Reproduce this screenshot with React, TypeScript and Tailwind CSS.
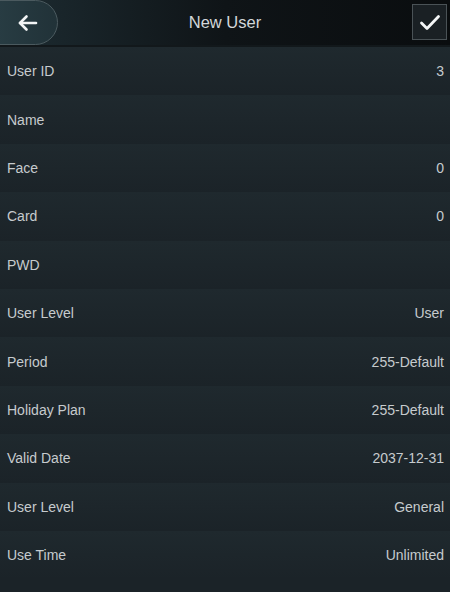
import React from "react";

const rows: [string, string][] = [
  ["User ID", "3"],
  ["Name", ""],
  ["Face", "0"],
  ["Card", "0"],
  ["PWD", ""],
  ["User Level", "User"],
  ["Period", "255-Default"],
  ["Holiday Plan", "255-Default"],
  ["Valid Date", "2037-12-31"],
  ["User Level", "General"],
  ["Use Time", "Unlimited"],
];

export default function App() {
  return (
    <div
      className="w-[450px] h-[592px] overflow-hidden bg-[#1b2328] text-[#c6cbce]"
      style={{ fontFamily: '"Liberation Sans", Arial, sans-serif' }}
    >
      {/* Header */}
      <div className="relative h-[45px] flex items-center justify-center bg-gradient-to-r from-[#1d2c32] via-[#0f1417] to-[#0a0d0f]">
        <button className="absolute left-[-30px] top-0 h-[45px] w-[88px] rounded-full border border-[#4b5a5f] bg-gradient-to-r from-[#2b4148] to-[#213238] flex items-center justify-end pr-[19px]">
          <svg width="21" height="18" viewBox="0 0 21 18" fill="none" stroke="#f2f4f5" strokeWidth="2.6" strokeLinecap="round" strokeLinejoin="round">
            <path d="M19 9H3" />
            <path d="M9.5 2.5 3 9l6.5 6.5" />
          </svg>
        </button>
        <span className="text-[16.5px] text-[#d3d7d9]">New User</span>
        <button className="absolute right-[3px] top-[4px] w-[35px] h-[36px] border border-[#4a5256] bg-[#1a2024] flex items-center justify-center">
          <svg width="22" height="17" viewBox="0 0 22 17" fill="none" stroke="#f4f6f7" strokeWidth="2.8" strokeLinecap="round" strokeLinejoin="round">
            <path d="M2.5 9 8 14.5 19.5 2.5" />
          </svg>
        </button>
      </div>
      <div className="h-[2px] bg-[#12181b]" />

      {/* Rows */}
      <div className="flex flex-col">
        {rows.map(([label, value], i) => (
          <div
            key={i}
            className="h-[48.4px] shrink-0 flex items-center justify-between pl-[7px] pr-[6px] pt-[1px] text-[14px] bg-gradient-to-b from-[#1f292e] to-[#1b2328]"
          >
            <span>{label}</span>
            <span>{value}</span>
          </div>
        ))}
      </div>
    </div>
  );
}
